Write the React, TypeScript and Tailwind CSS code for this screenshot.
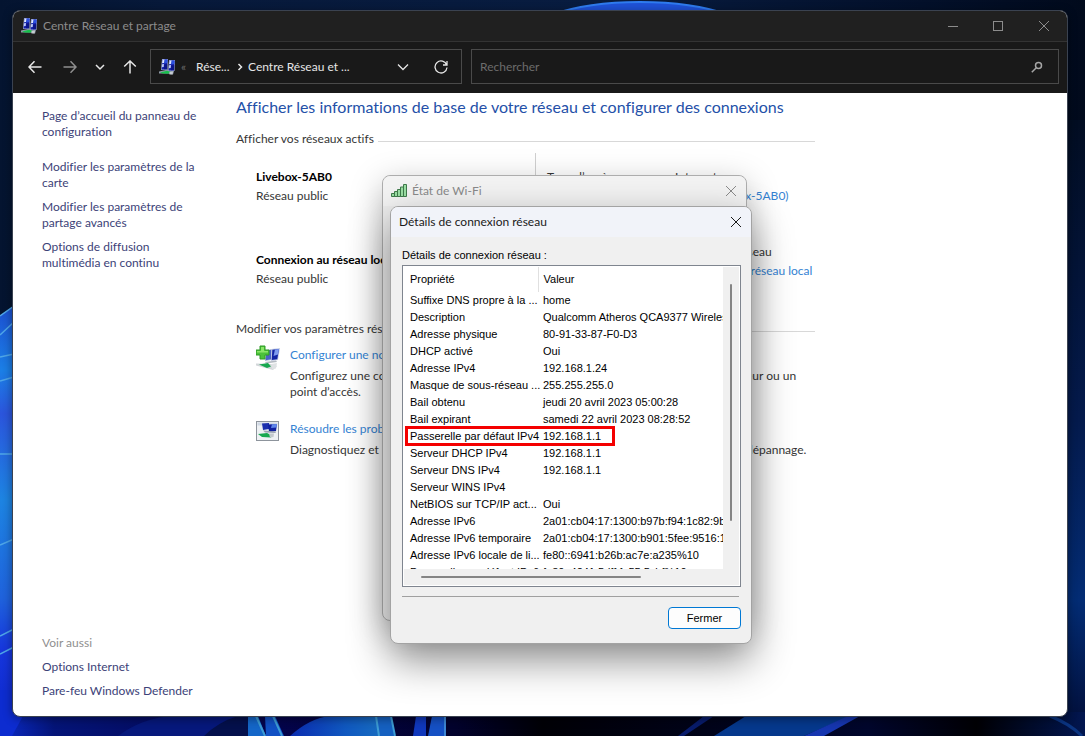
import React, { useState } from 'react';

const sidebarLinks = [
  'Modifier les paramètres de la carte',
  'Modifier les paramètres de partage avancés',
  'Options de diffusion multimédia en continu',
];

const seeAlso = ['Options Internet', 'Pare-feu Windows Defender'];

interface Detail {
  name: string;
  value: string;
  highlighted?: boolean;
}

const details: Detail[] = [
  { name: 'Suffixe DNS propre à la ...', value: 'home' },
  { name: 'Description', value: 'Qualcomm Atheros QCA9377 Wireless' },
  { name: 'Adresse physique', value: '80-91-33-87-F0-D3' },
  { name: 'DHCP activé', value: 'Oui' },
  { name: 'Adresse IPv4', value: '192.168.1.24' },
  { name: 'Masque de sous-réseau ...', value: '255.255.255.0' },
  { name: 'Bail obtenu', value: 'jeudi 20 avril 2023 05:00:28' },
  { name: 'Bail expirant', value: 'samedi 22 avril 2023 08:28:52' },
  { name: 'Passerelle par défaut IPv4', value: '192.168.1.1', highlighted: true },
  { name: 'Serveur DHCP IPv4', value: '192.168.1.1' },
  { name: 'Serveur DNS IPv4', value: '192.168.1.1' },
  { name: 'Serveur WINS IPv4', value: '' },
  { name: 'NetBIOS sur TCP/IP act...', value: 'Oui' },
  { name: 'Adresse IPv6', value: '2a01:cb04:17:1300:b97b:f94:1c82:9b' },
  { name: 'Adresse IPv6 temporaire', value: '2a01:cb04:17:1300:b901:5fee:9516:1' },
  { name: 'Adresse IPv6 locale de li...', value: 'fe80::6941:b26b:ac7e:a235%10' },
  { name: 'Passerelle par défaut IPv6', value: 'fe80::4241:5dff:fe55:5cbf%10' },
];

function Wallpaper() {
  return (
    <svg
      className="absolute inset-0 h-full w-full"
      viewBox="0 0 1085 736"
      preserveAspectRatio="none"
      aria-hidden="true"
    >
      <defs>
        <linearGradient id="sky" x1="0" x2="1" y1="0" y2="0">
          <stop offset="0" stopColor="#041430" />
          <stop offset="0.15" stopColor="#07193a" />
          <stop offset="0.55" stopColor="#081c40" />
          <stop offset="0.85" stopColor="#03102a" />
          <stop offset="1" stopColor="#010a1c" />
        </linearGradient>
        <linearGradient id="left" x1="0" x2="0" y1="0" y2="1">
          <stop offset="0" stopColor="#1c4fd0" />
          <stop offset="0.15" stopColor="#1b7fe6" />
          <stop offset="0.25" stopColor="#2b55dc" />
          <stop offset="0.45" stopColor="#1d84e2" />
          <stop offset="0.68" stopColor="#1f62dc" />
          <stop offset="0.8" stopColor="#1636dc" />
          <stop offset="1" stopColor="#0c24c8" />
        </linearGradient>
        <linearGradient id="right" x1="0" x2="0" y1="0" y2="1">
          <stop offset="0" stopColor="#020d22" />
          <stop offset="0.5" stopColor="#041a4c" />
          <stop offset="0.8" stopColor="#032c74" />
          <stop offset="1" stopColor="#02103c" />
        </linearGradient>
        <linearGradient id="bottom" x1="0" x2="1" y1="0" y2="0">
          <stop offset="0" stopColor="#0b2bc8" />
          <stop offset="0.05" stopColor="#041478" />
          <stop offset="0.25" stopColor="#04044c" />
          <stop offset="0.42" stopColor="#02022c" />
          <stop offset="0.5" stopColor="#000006" />
          <stop offset="0.8" stopColor="#00062c" />
          <stop offset="0.9" stopColor="#000004" />
          <stop offset="1" stopColor="#021650" />
        </linearGradient>
        <linearGradient id="glow" x1="0" x2="1" y1="0" y2="0">
          <stop offset="0" stopColor="#0a2cb0" />
          <stop offset="0.6" stopColor="#1058c0" />
          <stop offset="1" stopColor="#176cc0" />
        </linearGradient>
      </defs>
      <rect width="1085" height="736" fill="url(#sky)" />
      <ellipse cx="640" cy="46" rx="126" ry="44" fill="#1f52d8" stroke="#2f7cf0" strokeWidth="2" />
      <rect x="1060" y="120" width="25" height="600" fill="url(#right)" />
      <path d="M0 316 14 306V736H0Z" fill="url(#left)" />
      <path d="M0 316 14 306M0 335 14 322M0 357l14-3M0 381l14-4M0 454h14M0 545l14-6M0 636l14-7M0 654l14-7" stroke="#4fa6e8" strokeWidth="1.5" fill="none" />
      <rect y="712" width="1085" height="24" fill="url(#bottom)" />
      <path d="M0 690h12l10 28-10 18H0Z" fill="#0d2cd0" />
      <path d="M118 736q24-18 54-20h70l-4 20Z" fill="#06187c" />
      <path d="M204 736q14-14 34-20h12v20Z" fill="#04104c" />
      <path d="M248 716h10l8 20h-18Z" fill="#1466c8" />
      <path d="M265 716h10l9 20h-18Z" fill="#1150c4" />
      <path d="M256 716l9 20M273 716l9 20" stroke="#3d9cd4" strokeWidth="2" />
      <path d="M290 736q20-18 40-20h46l6 20Z" fill="url(#glow)" />
      <path d="M376 716h15l4 20h-16Z" fill="#1560c0" />
      <path d="M376 716l3 20M391 716l4 20" stroke="#3d9cd4" strokeWidth="2" />
      <path d="M416 716h10v20h-13Z" fill="#1038bc" />
      <path d="M432 716h14v20h-18Z" fill="#1550c4" />
      <path d="M445 716v20" stroke="#3d86d4" strokeWidth="2" />
      <path d="M678 736l26-20h10l-30 20Z" fill="#081c6c" />
      <path d="M714 736l32-20h104l-46 20Z" fill="#05388c" />
      <path d="M804 736l44-20h12l-36 20Z" fill="#1636b0" />
      <path d="M1050 716q20 8 32 20" stroke="#0b3480" strokeWidth="3" fill="none" />
    </svg>
  );
}

function Monitor({ shift }: { shift: string }) {
  return (
    <g transform={shift}>
      <path d="M1 0 7 0 6.500 11 0 11Z" fill="#a9b4d0" />
      <path d="M1.300.5 6.500.5 6 10.500.5 10.500Z" fill="#1420a8" />
      <path d="M3.500.5 6.500.5 6.300 4 3.200 4.500Z" fill="#2c50e0" />
      <path d="M1.500.5 3.500.5 3 4 1 4.300Z" fill="#dfe8ff" />
      <path d="M1 5.300 3 5 2.700 8 .8 8.300Z" fill="#bccaf8" />
      <path d="M3.300 5.500 6.200 5.200 6 10 3 10.300Z" fill="#0c1488" />
    </g>
  );
}

function NetworkIcon() {
  return (
    <svg className="h-4 w-4 shrink-0" viewBox="0 0 16 16" aria-hidden="true">
      <path d="M0 12.500 9 10.500 15 12 14 15.500 9 14.500 0 14.500Z" fill="#8f9aa6" />
      <Monitor shift="translate(2 0)" />
      <Monitor shift="translate(9 1)" />
      <path d="M1 13.500 8 11.800 12 13 9 14.800 4 14.500Z" fill="#17c04c" />
      <path d="M10.500 13 14 12.500 13.500 15.500 10.500 15.500Z" fill="#c6ccd2" />
    </svg>
  );
}

function AddConnectionIcon() {
  return (
    <svg className="h-[26px] w-6" viewBox="0 0 24 26" aria-hidden="true">
      <path d="M10 5 16 4 15.500 15 9 16Z" fill="#b9c4dc" />
      <path d="M10.500 5.500 15.500 4.700 15 14.300 9.500 15.200Z" fill="#4a62c8" />
      <path d="M15.500 4 24 3 22 15 15 16Z" fill="#c4cce4" />
      <path d="M16.300 4.700 23 4 21.300 14.200 15.700 15Z" fill="#1224a4" />
      <path d="M19 4.400 23 4 22 9.500 17.500 11Z" fill="#7d9aee" />
      <path d="M9 17 20 15.500 21 17 10 18.500Z" fill="#b4bac2" />
      <path d="M0 18.500 16 19 21 21 17 25 0 20.500Z" fill="#d3d7da" />
      <path d="M3 19.500 12 18 15 21.500 11 23Z" fill="#18a850" />
      <path d="M15 19 21 18 20 23.500 16 24Z" fill="#dfe2e4" />
      <path d="M4 1h5v4h4v5H9v4H4v-4H0V5h4Z" fill="#4cc23a" stroke="#2f9a26" strokeWidth="1" />
      <path d="M5 2h3v4h4v1.500H1V6h4Z" fill="#8be668" />
    </svg>
  );
}

function TroubleshootIcon() {
  return (
    <svg className="h-5 w-6" viewBox="0 0 24 20" aria-hidden="true">
      <rect x="0.500" y="0.500" width="22" height="19" fill="#eef1f4" stroke="#8d949c" />
      <rect x="1.500" y="1.500" width="20" height="3" fill="#cfd8e4" />
      <path d="M6 2.500 13 2 13 8 7 9Z" fill="#1b2fae" />
      <path d="M12 3.500 21 3 20 10 13 11Z" fill="#1020a0" />
      <path d="M16 3.300 21 3 20.500 6.500 15 7Z" fill="#5f86ea" />
      <path d="M7 9.500 20 10.500 19.500 12 9 11.500Z" fill="#9aa3b0" />
      <path d="M2 13 11 12 16 14.500 15 16.500 6 16Z" fill="#18a850" />
      <path d="M13 12.500 18 12.500 17.500 16 14 16.500Z" fill="#c3c9ce" />
    </svg>
  );
}

function SignalIcon() {
  return (
    <svg className="h-[14px] w-4" viewBox="0 0 16 14" aria-hidden="true">
      <g fill="#9be0a4" stroke="#3f7a4b" strokeWidth="1">
        <path d="M.5 9.500h3v3h-3zM3.500 7.500h3v5h-3zM6.500 5.500h3v7h-3zM9.500 3h3v9.500h-3zM12.500.5h3v12h-3z" />
      </g>
    </svg>
  );
}

function CloseIcon({ className = 'h-3 w-3' }: { className?: string }) {
  return (
    <svg className={className} viewBox="0 0 12 12" fill="none" stroke="currentColor" aria-hidden="true">
      <path d="M1 1 11 11M11 1 1 11" />
    </svg>
  );
}

function TitleBar() {
  return (
    <header className="flex h-[31px] items-stretch justify-between border-b border-[#333333] bg-[#202020] text-[#8c8c8c]">
      <div className="flex items-center gap-1.5 pl-2">
        <NetworkIcon />
        <h1 className="text-xs">Centre Réseau et partage</h1>
      </div>
      <div className="flex">
        <button aria-label="Réduire" className="grid w-[45px] place-items-center">
          <span className="h-px w-2.5 bg-current" />
        </button>
        <button aria-label="Agrandir" className="grid w-[46px] place-items-center">
          <span className="h-2.5 w-2.5 border border-current" />
        </button>
        <button aria-label="Fermer la fenêtre" className="grid w-[46px] place-items-center">
          <CloseIcon />
        </button>
      </div>
    </header>
  );
}

function Toolbar() {
  const [query, setQuery] = useState('');

  return (
    <div className="flex h-[51px] items-center bg-[#191919] pr-2 pb-0.5 pl-1 text-[#e6e6e6]">
      <button aria-label="Précédent" className="grid h-9 w-[35px] place-items-center">
        <svg className="h-[14px] w-[14px]" viewBox="0 0 14 14" fill="none" stroke="currentColor" strokeWidth="1.500">
          <path d="M13.500 7H1M6.500 1.200 1 7l5.500 5.800" />
        </svg>
      </button>
      <button aria-label="Suivant" className="grid h-9 w-[35px] place-items-center text-[#8e8e8e]">
        <svg className="h-[14px] w-[14px]" viewBox="0 0 14 14" fill="none" stroke="currentColor" strokeWidth="1.500">
          <path d="M.5 7H13M7.500 1.200 13 7l-5.500 5.800" />
        </svg>
      </button>
      <button aria-label="Emplacements récents" className="grid h-9 w-[26px] place-items-center">
        <svg className="h-[10px] w-[10px]" viewBox="0 0 10 10" fill="none" stroke="currentColor" strokeWidth="1.500">
          <path d="M1 3l4 4 4-4" />
        </svg>
      </button>
      <button aria-label="Dossier parent" className="grid h-9 w-[33px] place-items-center">
        <svg className="h-[14px] w-[14px]" viewBox="0 0 14 14" fill="none" stroke="currentColor" strokeWidth="1.500">
          <path d="M7 13.500V1M1.200 6.500 7 1l5.800 5.500" />
        </svg>
      </button>

      <nav className="ml-1 flex h-[35px] w-[312px] shrink-0 items-center border border-[#4a4a4a] pl-2 text-xs">
        <NetworkIcon />
        <span className="w-[21px] pl-1.5 text-[#6a6a6a]">«</span>
        <button className="w-9 text-left whitespace-nowrap">Rése...</button>
        <svg className="mx-1 h-2 w-2 shrink-0" viewBox="0 0 8 8" fill="none" stroke="currentColor" strokeWidth="1.500">
          <path d="M2.500 1l3 3-3 3" />
        </svg>
        <button className="flex-1 text-left whitespace-nowrap">Centre Réseau et ...</button>
        <button aria-label="Historique" className="grid h-8 w-9 place-items-center">
          <svg className="h-[12px] w-[12px]" viewBox="0 0 12 12" fill="none" stroke="currentColor" strokeWidth="1.300">
            <path d="M1 3.500l5 5 5-5" />
          </svg>
        </button>
        <button aria-label="Actualiser" className="grid h-8 w-10 place-items-center">
          <svg className="h-[14px] w-[14px]" viewBox="0 0 14 14" fill="none" stroke="currentColor" strokeWidth="1.300">
            <path d="M12.700 5A6 6 0 1 0 13 7.500M13 1v4H9" />
          </svg>
        </button>
      </nav>

      <form
        className="ml-[9px] flex h-[35px] flex-1 items-center border border-[#4a4a4a] pr-[15px] pl-2"
        onSubmit={e => e.preventDefault()}
      >
        <input
          type="text"
          aria-label="Rechercher"
          placeholder="Rechercher"
          value={query}
          onChange={e => setQuery(e.target.value)}
          className="min-w-0 flex-1 bg-transparent text-xs outline-none placeholder:text-[#6c6c6c]"
        />
        <button aria-label="Lancer la recherche" className="text-[#a6a6a6]">
          <svg className="h-3 w-3" viewBox="0 0 12 12" fill="none" stroke="currentColor" strokeWidth="1.500">
            <circle cx="7.500" cy="4.500" r="3" />
            <path d="M5.500 6.500.8 11.200" />
          </svg>
        </button>
      </form>
    </div>
  );
}

function Sidebar() {
  return (
    <aside className="flex w-[223px] shrink-0 flex-col justify-between pt-[15px] pr-7 pb-[17px] pl-[29px] text-[#3c4278]">
      <nav className="flex flex-col gap-2">
        <a href="#accueil" className="mb-[11px]">Page d’accueil du panneau de configuration</a>
        {sidebarLinks.map(label => (
          <a key={label} href="#parametres">{label}</a>
        ))}
      </nav>
      <nav className="flex flex-col gap-2 whitespace-nowrap">
        <h2 className="text-[#8f8f8f]">Voir aussi</h2>
        {seeAlso.map(label => (
          <a key={label} href="#voir-aussi">{label}</a>
        ))}
      </nav>
    </aside>
  );
}

function SectionTitle({ children }: { children: React.ReactNode }) {
  return (
    <div className="flex items-center gap-1 whitespace-nowrap">
      <h3>{children}</h3>
      <span className="mt-1 h-px flex-1 bg-[#d8d8d8]" />
    </div>
  );
}

interface NetworkProps {
  name: string;
  access: string;
  connection: string;
}

function NetworkSummary({ name, access, connection }: NetworkProps) {
  return (
    <>
      <div className="flex flex-col gap-[3px] pl-5">
        <h4 className="font-bold text-black">{name}</h4>
        <p>Réseau public</p>
      </div>
      <dl className="grid grid-cols-[128px_1fr] content-start gap-y-[3px] border-l border-[#d0d0d0] pl-[11px] whitespace-nowrap">
        <dt>Type d’accès :</dt>
        <dd>{access}</dd>
        <dt>Connexions :</dt>
        <dd><a href="#connexion" className="text-[#3583d3]">{connection}</a></dd>
      </dl>
    </>
  );
}

function NetworkCenter() {
  return (
    <main className="w-[579px] pt-1 whitespace-nowrap text-[#363636]">
      <h2 className="text-base leading-5 text-[#2450a8]">
        Afficher les informations de base de votre réseau et configurer des connexions
      </h2>
      <div className="mt-3.5">
        <SectionTitle>Afficher vos réseaux actifs</SectionTitle>
      </div>
      <div className="mt-1.5 grid grid-cols-[299px_1fr] *:pt-4">
        <NetworkSummary name="Livebox-5AB0" access="Internet" connection="Wi-Fi (Livebox-5AB0)" />
      </div>
      <div className="mt-8 grid grid-cols-[299px_1fr] *:first:pt-4 *:last:pt-2">
        <NetworkSummary
          name="Connexion au réseau local"
          access="Pas d’accès réseau"
          connection="Connexion au réseau local"
        />
      </div>

      <div className="mt-[34px]">
        <SectionTitle>Modifier vos paramètres réseau</SectionTitle>
      </div>
      <ul className="mt-2 flex flex-col gap-[21px] pl-5">
        <li className="grid grid-cols-[34px_1fr]">
          <AddConnectionIcon />
          <div className="pt-0.5">
            <a href="#configurer" className="text-[#3583d3]">Configurer une nouvelle connexion</a>
            <p className="mt-[5px]">
              Configurez une connexion haut débit, d’accès à distance ou VPN, ou configurez un routeur ou un
              <br />
              point d’accès.
            </p>
          </div>
        </li>
        <li className="grid grid-cols-[34px_1fr]">
          <TroubleshootIcon />
          <div>
            <a href="#resoudre" className="text-[#3583d3]">Résoudre les problèmes</a>
            <p className="mt-[5px]">
              Diagnostiquez et réparez les problèmes de réseau ou accédez à des informations sur le dépannage.
            </p>
          </div>
        </li>
      </ul>
    </main>
  );
}

function WifiStatusDialog() {
  return (
    <section
      aria-label="État de Wi-Fi"
      className="absolute top-[175px] left-[382px] h-[446px] w-[365px] rounded-lg border border-[#adadad] bg-[#eeeeee] shadow-[0_8px_32px_rgba(0,0,0,0.25)]"
    >
      <header className="flex h-[30px] items-center justify-between rounded-t-lg bg-[#f3f3f3] pr-[9px] pl-2 text-[#8a8a8a]">
        <div className="flex items-center gap-[5px]">
          <SignalIcon />
          <h2 className="text-xs">État de Wi-Fi</h2>
        </div>
        <button aria-label="Fermer l’état de Wi-Fi">
          <CloseIcon />
        </button>
      </header>
    </section>
  );
}

function DetailsTable() {
  return (
    <div className="h-[322px] border border-[#7f858f] bg-white p-px">
      <div className="flex h-[302px]">
        <div className="min-w-0 flex-1 overflow-hidden">
          <table className="w-[480px] table-fixed border-collapse leading-[17px] whitespace-nowrap text-black">
            <thead>
              <tr className="h-[25px] text-left">
                <th scope="col" className="w-[134px] border-r border-[#e0e0e0] pl-1.5 font-normal">Propriété</th>
                <th scope="col" className="pl-[5px] font-normal">Valeur</th>
              </tr>
            </thead>
            <tbody>
              {details.map(detail => (
                <tr key={detail.name} className="h-[17px]">
                  <td className="relative pl-1.5">
                    {detail.name}
                    {detail.highlighted && (
                      <span className="absolute -top-0.5 left-px h-5 w-[210px] border-3 border-[#f40000]" />
                    )}
                  </td>
                  <td className="pl-[5px]">{detail.value}</td>
                </tr>
              ))}
            </tbody>
          </table>
        </div>
        <div className="flex w-4 justify-center bg-[#f0f0f0] pt-[17px]">
          <span className="h-[237px] w-0.5 rounded bg-[#858585]" />
        </div>
      </div>
      <div className="flex h-4 items-center bg-[#f0f0f0] pl-[17px]">
        <span className="h-0.5 w-[220px] rounded bg-[#858585]" />
      </div>
    </div>
  );
}

function ConnectionDetailsDialog() {
  return (
    <section
      role="dialog"
      aria-label="Détails de connexion réseau"
      className="absolute top-[206px] left-[390px] w-[362px] overflow-hidden rounded-lg border border-[#a3a3a3] bg-[#f0f0f0] shadow-[0_16px_40px_rgba(0,0,0,0.45)]"
    >
      <header className="flex h-[30px] items-center justify-between bg-[#f1f3f9] pr-[9px] pl-2 text-[#1a1a1a]">
        <h2 className="text-xs">Détails de connexion réseau</h2>
        <button aria-label="Fermer les détails">
          <CloseIcon />
        </button>
      </header>
      <div className="pt-2.5 pr-2.5 pb-3.5 pl-[11px] font-['Liberation_Sans',Arial,sans-serif] text-[11px] text-black">
        <p className="mb-[2px]">Détails de connexion réseau :</p>
        <DetailsTable />
        <hr className="mt-[9px] mr-0.5 border-[#a0a0a0]" />
        <div className="mt-2.5 flex justify-end">
          <button className="h-[22px] w-[73px] rounded border border-[#0078d4] bg-[#fdfdfd]">Fermer</button>
        </div>
      </div>
    </section>
  );
}

export default function App() {
  return (
    <div className="relative flex min-h-screen overflow-hidden bg-[#04122c] pt-2.5 pr-[17px] pb-[19px] pl-3 font-[Lato,'Segoe_UI',sans-serif] text-xs leading-4 [font-variant-ligatures:none]">
      <Wallpaper />
      <div className="relative flex min-w-0 flex-1 flex-col overflow-hidden rounded-lg border border-[#3a4250] bg-white shadow-[0_2px_10px_rgba(0,0,0,0.4)]">
        <TitleBar />
        <Toolbar />
        <div className="flex flex-1">
          <Sidebar />
          <NetworkCenter />
        </div>
      </div>
      <WifiStatusDialog />
      <ConnectionDetailsDialog />
    </div>
  );
}
